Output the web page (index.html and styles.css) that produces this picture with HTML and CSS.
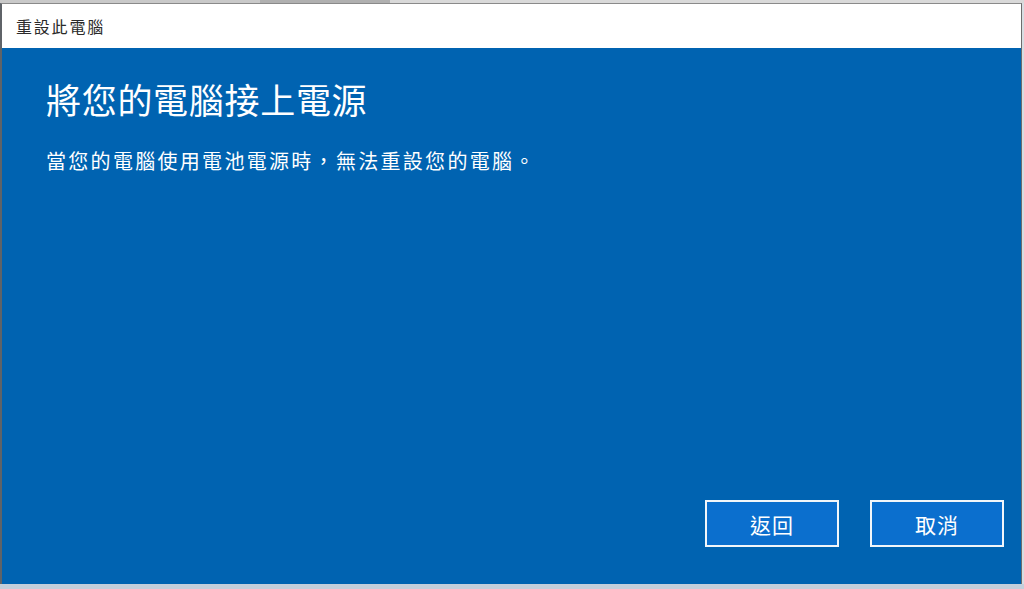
FILE: index.html
```html
<!DOCTYPE html>
<html lang="zh-Hant">
<head>
<meta charset="utf-8">
<title>重設此電腦</title>
<link rel="stylesheet" href="styles.css">
</head>
<body>
<div class="screen">
  <div class="top-strip"></div>
  <div class="window">
    <div class="titlebar">重設此電腦</div>
    <div class="content">
      <div class="text">
        <h1 class="heading">將您的電腦接上電源</h1>
        <p class="message">當您的電腦使用電池電源時，無法重設您的電腦。</p>
      </div>
      <div class="actions">
        <button class="btn">返回</button>
        <button class="btn">取消</button>
      </div>
    </div>
  </div>
  <div class="bottom-strip"></div>
</div>
</body>
</html>
```

FILE: styles.css
```css
html, body {
  margin: 0;
  padding: 0;
  width: 1024px;
  height: 589px;
  overflow: hidden;
  background: #d8dde2;
}
.screen {
  display: flex;
  flex-direction: column;
  width: 1024px;
  height: 589px;
  font-family: "Noto Sans CJK TC", "Noto Sans", sans-serif;
}
.top-strip {
  height: 3px;
  background: linear-gradient(to right, #c9c9c9 0, #c9c9c9 260px, #b0b0b0 260px, #b0b0b0 390px, #d9d9d9 390px);
}
.window {
  flex: 1;
  display: flex;
  flex-direction: column;
  border-left: 2px solid #5f6368;
  border-right: 1px solid #6d6d6d;
  border-top: 1px solid #8a8a8a;
  box-sizing: border-box;
  width: 1022px;
}
.titlebar {
  height: 44px;
  background: #ffffff;
  color: #2a2a2a;
  font-size: 16px;
  letter-spacing: 1.8px;
  display: flex;
  align-items: center;
  padding-left: 14px;
  box-sizing: border-box;
}
.content {
  flex: 1;
  background: #0063b1;
  display: flex;
  flex-direction: column;
  justify-content: space-between;
  padding: 0 17px 37px 44px;
}
.heading {
  margin: 25px 0 0 0;
  font-size: 35px;
  font-weight: 400;
  color: #ffffff;
  line-height: 52px;
  letter-spacing: 0.7px;
}
.message {
  margin: 22px 0 0 0;
  font-size: 20px;
  color: #ffffff;
  line-height: 28px;
  letter-spacing: 2.3px;
}
.actions {
  display: flex;
  justify-content: flex-end;
  gap: 31px;
}
.btn {
  width: 134px;
  height: 47px;
  background: #0b6fce;
  border: 2px solid #f2f6fa;
  color: #ffffff;
  font-family: "Noto Sans CJK TC", "Noto Sans", sans-serif;
  font-size: 21px;
  letter-spacing: 1px;
  padding: 0;
}
.bottom-strip {
  height: 5px;
  background: #c3cfdb;
}
```
